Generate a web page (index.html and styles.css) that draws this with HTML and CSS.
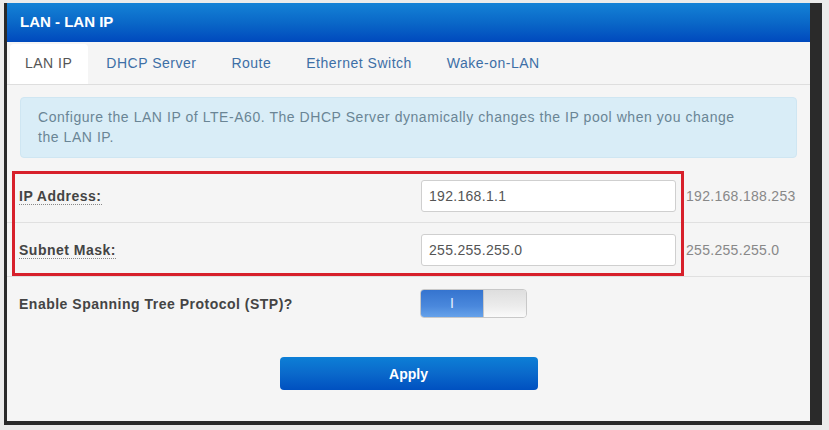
FILE: index.html
```html
<!DOCTYPE html>
<html lang="en">
<head>
<meta charset="utf-8">
<title>LAN - LAN IP</title>
<link rel="stylesheet" href="styles.css">
</head>
<body>
<div class="frame">
  <div class="header">LAN - LAN IP</div>
  <ul class="tabs">
    <li class="tab active">LAN IP</li>
    <li class="tab">DHCP Server</li>
    <li class="tab">Route</li>
    <li class="tab">Ethernet Switch</li>
    <li class="tab">Wake-on-LAN</li>
  </ul>
  <div class="info">Configure the LAN IP of LTE-A60. The DHCP Server dynamically changes the IP pool when you change the LAN IP.</div>
  <div class="form">
    <div class="row">
      <span class="label"><span class="hint">IP Address:</span></span>
      <input class="field" type="text" value="192.168.1.1">
      <span class="current">192.168.188.253</span>
    </div>
    <div class="row">
      <span class="label"><span class="hint">Subnet Mask:</span></span>
      <input class="field" type="text" value="255.255.255.0">
      <span class="current">255.255.255.0</span>
    </div>
    <div class="row last">
      <span class="label">Enable Spanning Tree Protocol (STP)?</span>
      <div class="toggle"><span class="on">I</span><span class="off"></span></div>
      <span></span>
    </div>
    <div class="highlight"></div>
  </div>
  <div class="actions"><button class="apply">Apply</button></div>
</div>
</body>
</html>
```

FILE: styles.css
```css
html, body {
  margin: 0;
  padding: 0;
  background: #ebebeb;
  font-family: "Liberation Sans", Arial, sans-serif;
}
.frame {
  position: relative;
  margin: 3px 0 0 4px;
  width: 803px;
  height: 418px;
  background: #f5f5f5;
  border-left: 3px solid #2a2a2a;
  border-right: 12px solid #2a2a2a;
  border-bottom: 4px solid #2a2a2a;
}
.header {
  height: 39px;
  line-height: 38px;
  padding-left: 13px;
  color: #fff;
  font-weight: bold;
  font-size: 15px;
  background: linear-gradient(to bottom, #1482d6 0%, #0a68c8 50%, #0049bd 100%);
}
.tabs {
  list-style: none;
  margin: 0;
  padding: 2px 0 0 3px;
  height: 40px;
  display: flex;
  border-bottom: 1px solid #dedede;
  background: #f5f5f5;
}
.tab {
  padding: 0 16px 0 15px;
  margin-right: 4px;
  line-height: 38px;
  font-size: 14px;
  letter-spacing: 0.5px;
  color: #3d6fa6;
  border-radius: 4px 4px 0 0;
}
.tab.active {
  background: #fff;
  color: #555;
  margin-right: 3px;
}
.info {
  margin: 12px 13px 0 13px;
  padding: 9px 45px 10px 17px;
  background: #d9edf7;
  border: 1px solid #cfe6f2;
  border-radius: 4px;
  color: #6a8595;
  font-size: 14px;
  line-height: 20px;
  letter-spacing: 0.55px;
}
.form {
  position: relative;
  margin-top: 11px;
}
.row {
  display: grid;
  grid-template-columns: 402px 255px auto;
  align-items: center;
  height: 53px;
  padding-left: 12px;
  border-bottom: 1px solid #e0e0e0;
}
.row.last {
  border-bottom: none;
}
.label {
  font-weight: bold;
  font-size: 14px;
  color: #444;
  letter-spacing: 0.5px;
}
.hint {
  border-bottom: 1px dotted #888;
}
.field {
  box-sizing: border-box;
  width: 255px;
  height: 32px;
  margin: 0;
  padding: 0 7px;
  border: 1px solid #cfcfcf;
  border-radius: 3px;
  background: #fff;
  font-family: "Liberation Sans", Arial, sans-serif;
  font-size: 14px;
  color: #555;
  letter-spacing: 0.3px;
}
.current {
  padding-left: 10px;
  font-size: 14px;
  color: #888;
  letter-spacing: 0.3px;
}
.toggle {
  display: flex;
  width: 107px;
  height: 29px;
  border: 1px solid #c8c8c8;
  border-radius: 4px;
  overflow: hidden;
  box-sizing: border-box;
  margin-left: -1px;
}
.toggle .on {
  width: 62px;
  background: linear-gradient(to bottom, #3574cf 0%, #4a88dc 60%, #66a2ea 100%);
  color: #e8f0ff;
  font-size: 14px;
  text-align: center;
  line-height: 27px;
}
.toggle .off {
  flex: 1;
  background: linear-gradient(to bottom, #dedede 0%, #ececec 60%, #fafafa 100%);
  border-left: 1px solid #c8c8c8;
}
.highlight {
  position: absolute;
  left: 5px;
  top: 2px;
  width: 666px;
  height: 99px;
  border: 3px solid #d7202b;
}
.actions {
  display: flex;
  justify-content: center;
  margin-top: 27px;
}
.apply {
  width: 258px;
  height: 33px;
  border: none;
  border-radius: 4px;
  background: linear-gradient(to bottom, #0d7fd6 0%, #0a69cb 50%, #0050c0 100%);
  color: #fff;
  font-family: "Liberation Sans", Arial, sans-serif;
  font-weight: bold;
  font-size: 14px;
  cursor: pointer;
}
```
